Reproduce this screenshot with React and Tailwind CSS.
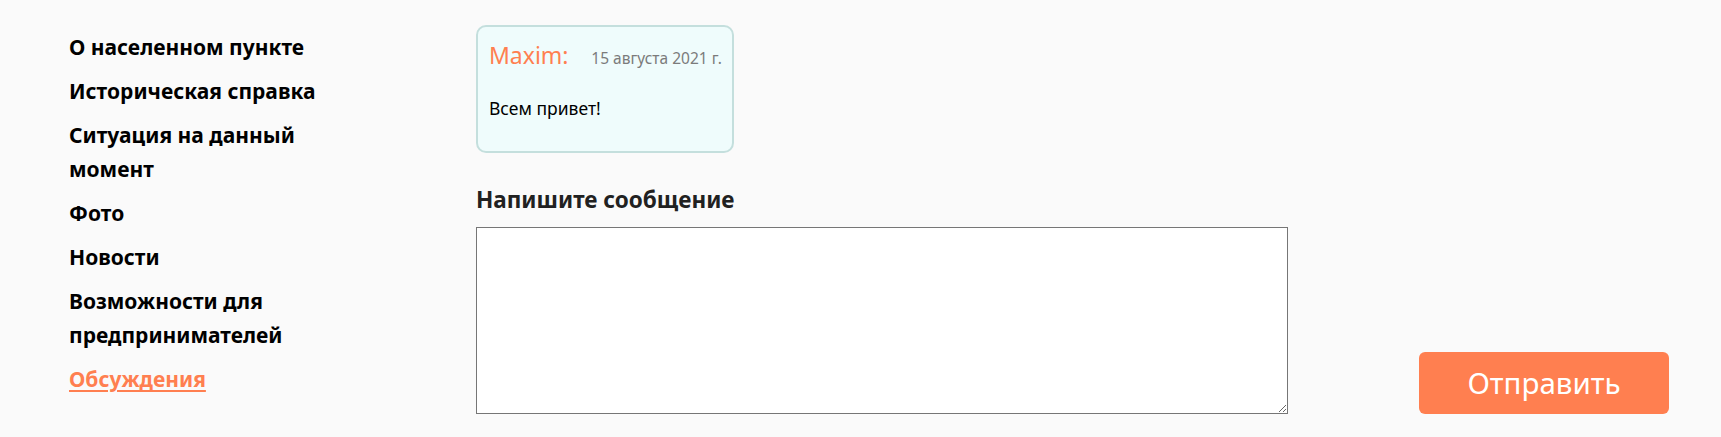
const links = [
  { label: 'О населенном пункте' },
  { label: 'Историческая справка' },
  { label: 'Ситуация на данный момент' },
  { label: 'Фото' },
  { label: 'Новости' },
  { label: 'Возможности для предпринимателей' },
  { label: 'Обсуждения', active: true },
]

function Sidebar() {
  return (
    <nav className="w-[476px] shrink-0 pl-[69px] pt-[30px]">
      <ul className="flex w-[270px] flex-col gap-[10px]">
        {links.map((l) => (
          <li key={l.label}>
            <a
              href="#"
              className={
                l.active
                  ? 'text-[21px] font-bold leading-[34px] text-[#ff7f50] underline underline-offset-[3px]'
                  : 'text-[21px] font-bold leading-[34px] text-black'
              }
            >
              {l.label}
            </a>
          </li>
        ))}
      </ul>
    </nav>
  )
}

function Comment() {
  return (
    <div className="w-[258px] rounded-[10px] border-2 border-[#c4dfdd] bg-[#effcfc] pt-[12px] pr-[10px] pb-[31px] pl-[11px]">
      <div className="flex items-baseline justify-between">
        <span className="text-[23px] leading-[32px] text-[#ff7f50]">Maxim:</span>
        <span className="text-[15.5px] leading-[20px] text-[#7b7b7b]">15 августа 2021 г.</span>
      </div>
      <p className="mt-[25px] text-[17.5px] leading-[24px] text-black">Всем привет!</p>
    </div>
  )
}

export default function App() {
  return (
    <div className="flex min-h-[437px] bg-[#fafafa] font-['Noto_Sans',sans-serif]">
      <Sidebar />
      <main className="flex flex-1 flex-col pt-[25px] pr-[52px]">
        <Comment />
        <h2 className="mt-[32px] text-[22.5px] font-bold leading-[30px] text-[#212121]">
          Напишите сообщение
        </h2>
        <div className="mt-[12px] flex items-end justify-between">
          <textarea className="h-[187px] w-[812px] border border-[#767676] bg-white p-2 text-[16px] outline-none" />
          <button className="h-[62px] w-[250px] rounded-[6px] bg-[#ff7f50] text-[29.5px] text-white">
            Отправить
          </button>
        </div>
      </main>
    </div>
  )
}
